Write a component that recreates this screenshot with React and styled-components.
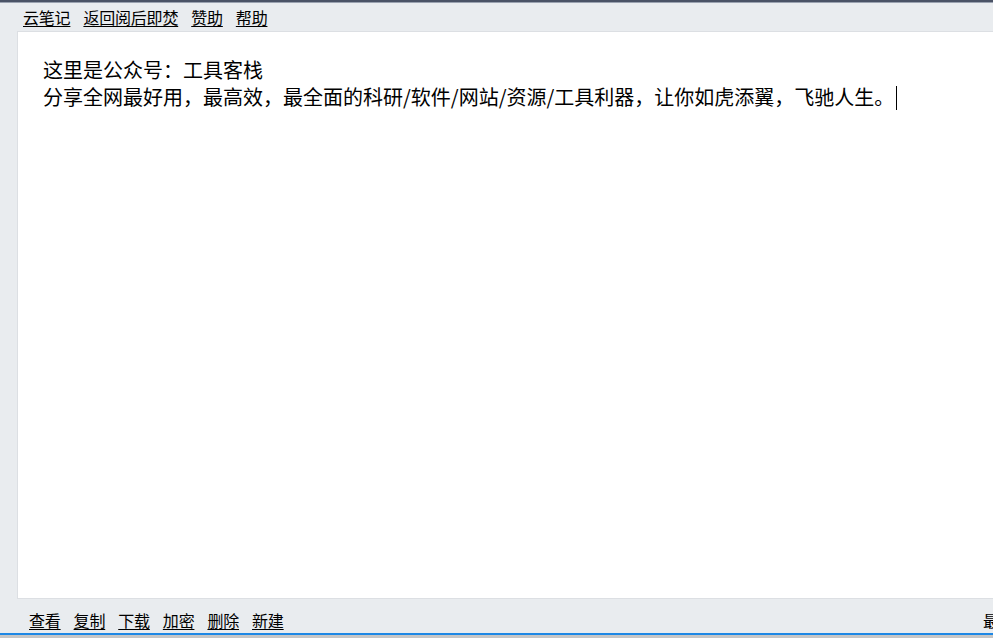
import React from 'react'
import styled, { createGlobalStyle } from 'styled-components'

const GlobalStyle = createGlobalStyle`
    html, body {
        margin: 0;
        padding: 0;
        overflow: hidden;
        background: #e9ecef;
    }
`

const StyledPage = styled.div`
    width: 1200px;
    height: 638px;
    display: flex;
    flex-direction: column;
    background: #e9ecef;
    font-family: "Noto Sans CJK SC", "Noto Sans", sans-serif;
    color: #000;
`

const StyledTopStrip = styled.div`
    height: 2px;
    background: #4a5366;
    border-bottom: 1px solid #9aa2b0;
`

const StyledLinkBar = styled.nav`
    display: flex;
    align-items: center;
    gap: ${props => props.gap}px;
    height: ${props => props.height}px;
    padding-left: ${props => props.indent}px;
    padding-top: ${props => props.drop || 0}px;
    box-sizing: border-box;
    font-size: 16px;
    line-height: 20px;
    letter-spacing: -0.2px;
    flex-shrink: 0;
`

const StyledLink = styled.a`
    color: #000;
    text-decoration: underline;
    text-underline-offset: 2px;
    cursor: pointer;
`

const StyledEditor = styled.div`
    margin: 0 17px;
    height: 568px;
    box-sizing: border-box;
    background: #fff;
    border: 1px solid #dcdfe3;
    padding: 24px 25px;
    font-size: 20px;
    line-height: 27px;
    white-space: pre-wrap;
`

const StyledCaret = styled.span`
    display: inline-block;
    width: 1px;
    height: 24px;
    margin-left: 2px;
    vertical-align: -5px;
    background: #000;
`

const StyledFooter = styled.div`
    display: flex;
    align-items: center;
    height: 34px;
    flex-shrink: 0;
`

const StyledStatus = styled.div`
    margin-left: auto;
    width: 200px;
    flex-shrink: 0;
    padding-right: 17px;
    padding-top: 8px;
    font-family: "Liberation Serif", "Noto Sans CJK SC", serif;
    font-size: 16px;
    white-space: nowrap;
`

const StyledBlueLine = styled.div`
    height: 2px;
    background: #1e88e5;
`

const StyledBottomEdge = styled.div`
    flex: 1;
    background: #c6c6c6;
`

const topLinks = ['云笔记', '返回阅后即焚', '赞助', '帮助']
const bottomLinks = ['查看', '复制', '下载', '加密', '删除', '新建']

export default function App() {
    return (
        <StyledPage>
            <GlobalStyle />
            <StyledTopStrip />
            <StyledLinkBar gap={13} height={28} indent={23}>
                {topLinks.map(label => <StyledLink key={label}>{label}</StyledLink>)}
            </StyledLinkBar>
            <StyledEditor>
                {'这里是公众号：工具客栈\n分享全网最好用，最高效，最全面的科研/软件/网站/资源/工具利器，让你如虎添翼，飞驰人生。'}
                <StyledCaret />
            </StyledEditor>
            <StyledFooter>
                <StyledLinkBar gap={13} height={34} indent={29} drop={8}>
                    {bottomLinks.map(label => <StyledLink key={label}>{label}</StyledLink>)}
                </StyledLinkBar>
                <StyledStatus>最后保存：刚刚</StyledStatus>
            </StyledFooter>
            <StyledBlueLine />
            <StyledBottomEdge />
        </StyledPage>
    )
}
